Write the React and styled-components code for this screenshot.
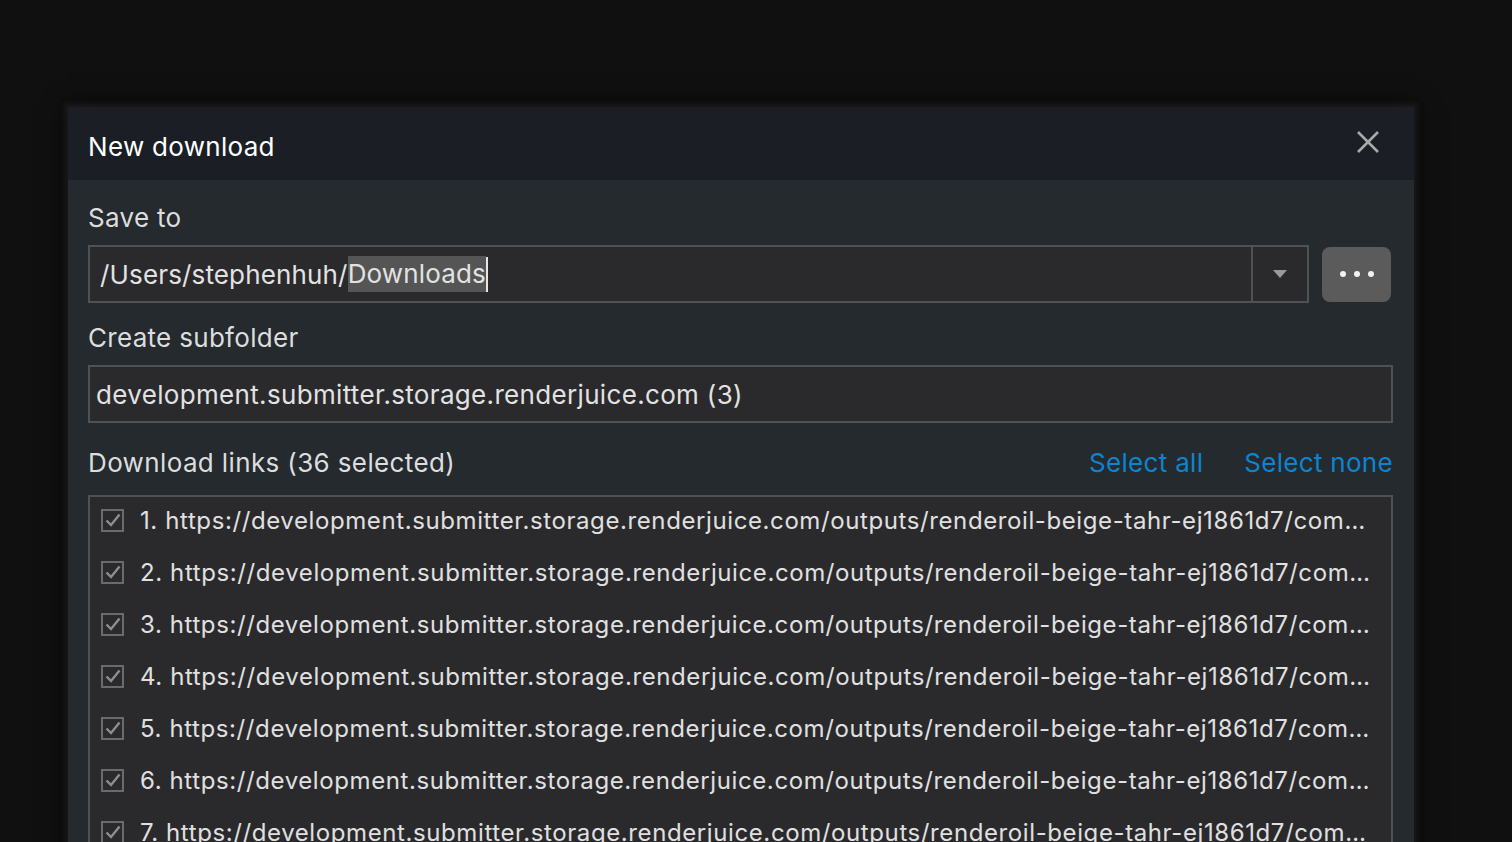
import React, { useState } from "react";
import styled, { createGlobalStyle } from "styled-components";

const GlobalStyle = createGlobalStyle`
  html, body {
    margin: 0;
    padding: 0;
    background: #101010;
    overflow: hidden;
  }
  body {
    font-family: Inter, "Noto Sans", "Liberation Sans", sans-serif;
  }
`;

const Page = styled.div`
  width: 1512px;
  height: 842px;
  padding: 107px 0 0 68px;
  box-sizing: border-box;
  overflow: hidden;
`;

const Dialog = styled.div`
  width: 1346px;
  background: #242a2e;
  box-shadow: 0 0 6px 3px rgba(60, 60, 60, 0.35), 0 0 24px rgba(0, 0, 0, 0.8);
`;

const Header = styled.div`
  height: 73px;
  box-sizing: border-box;
  background: #1b1f25;
  display: flex;
  align-items: center;
  justify-content: space-between;
  padding: 6px 28px 0 20px;
`;

const Title = styled.h1`
  margin: 0;
  font-size: 26px;
  font-weight: 400;
  color: #ffffff;
  letter-spacing: 0.3px;
`;

const CloseButton = styled.button`
  width: 36px;
  height: 36px;
  border: none;
  background: transparent;
  padding: 0;
  display: flex;
  align-items: center;
  justify-content: center;
  cursor: pointer;
  margin-top: -9px;
`;

const Body = styled.div`
  padding: 20px 21px 0 20px;
`;

const Label = styled.div`
  font-size: 26px;
  line-height: 34px;
  letter-spacing: 0.3px;
  color: #dddddd;
  margin-top: ${(p) => p.$top || 0}px;
  margin-bottom: 10px;
`;

const PathRow = styled.div`
  display: flex;
  gap: 13px;
  align-items: center;
`;

const Combo = styled.div`
  flex: 1;
  height: 58px;
  box-sizing: border-box;
  border: 2px solid #4f5153;
  background: #2a2a2c;
  display: flex;
`;

const ComboText = styled.div`
  flex: 1;
  display: flex;
  align-items: center;
  padding-left: 10px;
  font-size: 26px;
  letter-spacing: 0.15px;
  color: #e2e2e2;
  white-space: nowrap;
`;

const Selected = styled.span`
  background: #555556;
  line-height: 36px;
`;

const Caret = styled.span`
  display: inline-block;
  width: 2px;
  height: 35px;
  background: #e6e6e6;
`;

const DropButton = styled.div`
  width: 54px;
  border-left: 2px solid #4f5153;
  display: flex;
  align-items: center;
  justify-content: center;
`;

const MoreButton = styled.button`
  width: 69px;
  height: 55px;
  margin-right: 2px;
  border: none;
  border-radius: 8px;
  background: #5b5b5c;
  display: flex;
  align-items: center;
  justify-content: center;
  gap: 8px;
  padding: 0;
`;

const Dot = styled.span`
  width: 6px;
  height: 6px;
  border-radius: 50%;
  background: #f2f2f2;
`;

const TextField = styled.div`
  height: 58px;
  box-sizing: border-box;
  border: 2px solid #4f5153;
  background: #2a2a2c;
  display: flex;
  align-items: center;
  padding-left: 6px;
  font-size: 26px;
  letter-spacing: 0.33px;
  color: #e2e2e2;
`;

const LinksHeader = styled.div`
  display: flex;
  align-items: center;
  margin-top: 22px;
  margin-bottom: 16px;
  height: 34px;
`;

const LinksTitle = styled.div`
  flex: 1;
  font-size: 26px;
  letter-spacing: 0.37px;
  color: #dddddd;
`;

const LinkButton = styled.button`
  border: none;
  background: transparent;
  padding: 0;
  margin-left: ${(p) => p.$gap || 0}px;
  font-family: inherit;
  font-size: 26px;
  letter-spacing: 0.3px;
  color: #0d84d0;
  cursor: pointer;
`;

const List = styled.div`
  border: 2px solid #4f5153;
  border-bottom: none;
  background: #2a2a2c;
  height: 400px;
`;

const Row = styled.label`
  height: 52px;
  display: flex;
  align-items: center;
  padding: 0 18px 0 11px;
  gap: 16px;

  &:first-child {
    margin-top: -3px;
  }
`;

const Box = styled.span`
  flex: none;
  width: 23px;
  height: 23px;
  box-sizing: border-box;
  border: 2px solid #6b6b6d;
  display: flex;
  align-items: center;
  justify-content: center;
`;

const RowText = styled.span`
  flex: 1;
  min-width: 0;
  font-size: 24px;
  letter-spacing: 0.6px;
  color: #e0e0e0;
  white-space: nowrap;
  overflow: hidden;
  text-overflow: ellipsis;
`;

const url =
  "https://development.submitter.storage.renderjuice.com/outputs/renderoil-beige-tahr-ej1861d7/compositor-output-0001.png";

export default function App() {
  const [links] = useState(Array.from({ length: 36 }, (_, i) => `${i + 1}. ${url}`));

  return (
    <>
      <GlobalStyle />
      <Page>
        <Dialog>
          <Header>
            <Title>New download</Title>
            <CloseButton aria-label="Close">
              <svg width="24" height="24" viewBox="0 0 24 24">
                <path d="M2 2 L22 22 M22 2 L2 22" stroke="#a9a9a9" strokeWidth="2.6" />
              </svg>
            </CloseButton>
          </Header>
          <Body>
            <Label $top={1}>Save to</Label>
            <PathRow>
              <Combo>
                <ComboText>
                  /Users/stephenhuh/<Selected>Downloads</Selected>
                  <Caret />
                </ComboText>
                <DropButton>
                  <svg width="14" height="8" viewBox="0 0 14 8">
                    <path d="M0 0 H14 L7 8 Z" fill="#9a9a9a" />
                  </svg>
                </DropButton>
              </Combo>
              <MoreButton aria-label="Browse">
                <Dot />
                <Dot />
                <Dot />
              </MoreButton>
            </PathRow>
            <Label $top={18}>Create subfolder</Label>
            <TextField>development.submitter.storage.renderjuice.com (3)</TextField>
            <LinksHeader>
              <LinksTitle>Download links (36 selected)</LinksTitle>
              <LinkButton>Select all</LinkButton>
              <LinkButton $gap={41}>Select none</LinkButton>
            </LinksHeader>
            <List>
              {links.map((l) => (
                <Row key={l}>
                  <Box>
                    <svg width="16" height="14" viewBox="0 0 16 14">
                      <path d="M1.5 7.5 L6 12 L14.5 1.5" fill="none" stroke="#8e8e90" strokeWidth="2.4" />
                    </svg>
                  </Box>
                  <RowText>{l}</RowText>
                </Row>
              ))}
            </List>
          </Body>
        </Dialog>
      </Page>
    </>
  );
}
